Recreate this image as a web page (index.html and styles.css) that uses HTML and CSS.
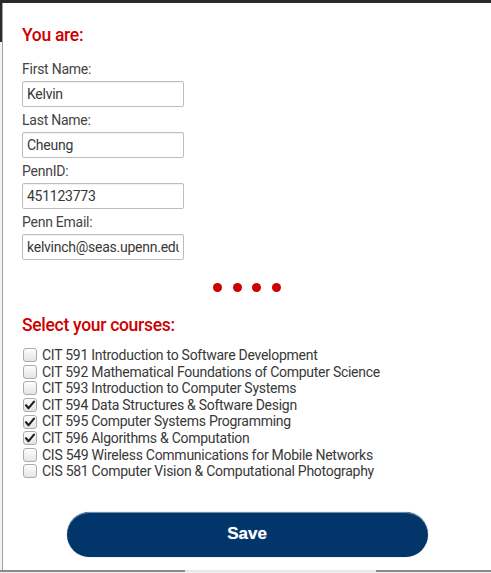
FILE: index.html
```html
<!DOCTYPE html>
<html lang="en">
<head>
<meta charset="utf-8">
<title>You are</title>
<link rel="stylesheet" href="styles.css">
</head>
<body>
<div class="panel">
  <h2 class="heading">You are:</h2>
  <div class="field">
    <label class="label" for="first">First Name:</label>
    <input class="input" id="first" type="text" value="Kelvin">
  </div>
  <div class="field">
    <label class="label" for="last">Last Name:</label>
    <input class="input" id="last" type="text" value="Cheung">
  </div>
  <div class="field">
    <label class="label" for="pennid">PennID:</label>
    <input class="input" id="pennid" type="text" value="451123773">
  </div>
  <div class="field">
    <label class="label" for="email">Penn Email:</label>
    <input class="input" id="email" type="text" value="kelvinch@seas.upenn.edu">
  </div>

  <div class="dots">
    <span class="dot"></span><span class="dot"></span><span class="dot"></span><span class="dot"></span>
  </div>

  <h2 class="heading heading-courses">Select your courses:</h2>
  <ul class="courses">
    <li class="course"><span class="box"></span>CIT 591 Introduction to Software Development</li>
    <li class="course"><span class="box"></span>CIT 592 Mathematical Foundations of Computer Science</li>
    <li class="course"><span class="box"></span>CIT 593 Introduction to Computer Systems</li>
    <li class="course"><span class="box"><svg class="check" viewBox="0 0 14 14"><path d="M3 7.2 L5.6 10.2 L11 3.6" /></svg></span>CIT 594 Data Structures &amp; Software Design</li>
    <li class="course"><span class="box"><svg class="check" viewBox="0 0 14 14"><path d="M3 7.2 L5.6 10.2 L11 3.6" /></svg></span>CIT 595 Computer Systems Programming</li>
    <li class="course"><span class="box"><svg class="check" viewBox="0 0 14 14"><path d="M3 7.2 L5.6 10.2 L11 3.6" /></svg></span>CIT 596 Algorithms &amp; Computation</li>
    <li class="course"><span class="box"></span>CIS 549 Wireless Communications for Mobile Networks</li>
    <li class="course"><span class="box"></span>CIS 581 Computer Vision &amp; Computational Photography</li>
  </ul>

  <div class="actions">
    <button class="save" type="button">Save</button>
  </div>
</div>
<div class="edge"></div>
</body>
</html>
```
FILE: styles.css
```css
html, body {
  margin: 0;
  padding: 0;
}

body {
  width: 491px;
  height: 573px;
  overflow: hidden;
  background: linear-gradient(to bottom, #2a2a2a 0, #2a2a2a 42px, #f2f2f2 42px);
  font-family: Roboto, "Liberation Sans", sans-serif;
}

.panel {
  box-sizing: border-box;
  margin: 3px 0 0 2px;
  height: 567px;
  background: #ffffff;
  border-left: 1px solid #a4a4a4;
  padding: 21px 0 0 19px;
  display: flex;
  flex-direction: column;
}

.heading {
  margin: 0 0 13px 0;
  font-size: 17.5px;
  line-height: 22px;
  font-weight: 500;
  letter-spacing: -0.3px;
  color: #cc0000;
}

.field {
  display: flex;
  flex-direction: column;
  margin-bottom: 3px;
}

.label {
  font-size: 14px;
  letter-spacing: -0.25px;
  line-height: 20px;
  color: #444444;
  margin-bottom: 2px;
}

.input {
  box-sizing: border-box;
  width: 162px;
  height: 26px;
  margin: 0;
  padding: 0 4px;
  border: 1px solid #bdbdbd;
  border-radius: 2px;
  box-shadow: inset 0 1px 1px rgba(0, 0, 0, 0.06);
  font-family: Roboto, "Liberation Sans", sans-serif;
  font-size: 14px;
  letter-spacing: -0.25px;
  color: #383838;
  background: #ffffff;
  outline: none;
}

.dots {
  display: flex;
  justify-content: center;
  gap: 10.5px;
  margin: 20px 0 0 -19px;
  height: 9px;
}

.dot {
  width: 9px;
  height: 9px;
  border-radius: 50%;
  background: #cc0000;
}

.heading-courses {
  margin-top: 22px;
  margin-bottom: 11px;
}

.courses {
  list-style: none;
  margin: 0;
  padding: 0;
}

.course {
  display: flex;
  align-items: center;
  height: 16.6px;
  font-size: 14px;
  letter-spacing: -0.27px;
  line-height: 16.6px;
  color: #383838;
  white-space: nowrap;
}

.box {
  box-sizing: border-box;
  flex: none;
  width: 14px;
  height: 14px;
  margin: 0 5px 0 1px;
  border: 1px solid #ababab;
  border-radius: 3px;
  background: linear-gradient(to bottom, #fdfdfd, #e4e4e4);
  position: relative;
}

.check {
  display: block;
  position: absolute;
  left: -1px;
  top: -1px;
  width: 14px;
  height: 14px;
}

.check path {
  fill: none;
  stroke: #1f1f1f;
  stroke-width: 2.1;
  stroke-linecap: round;
  stroke-linejoin: round;
}

.actions {
  display: flex;
  justify-content: center;
  margin: 32px 0 0 -19px;
}

.save {
  width: 361px;
  height: 45px;
  border: none;
  border-radius: 23px;
  background: #02356a;
  box-shadow: inset 0 1px 0 #6f8cab, 0 0 1px rgba(2, 53, 106, 0.6);
  color: #ffffff;
  font-family: "Liberation Sans", Arial, sans-serif;
  font-weight: bold;
  font-size: 17px;
  text-shadow: 0 0 1px rgba(255, 255, 255, 0.5);
  cursor: pointer;
}

.edge {
  height: 2px;
  background: linear-gradient(to right, #8a8a8a 0, #8a8a8a 185px, #e8e8e8 185px, #e8e8e8 376px, #8a8a8a 376px);
}
```
